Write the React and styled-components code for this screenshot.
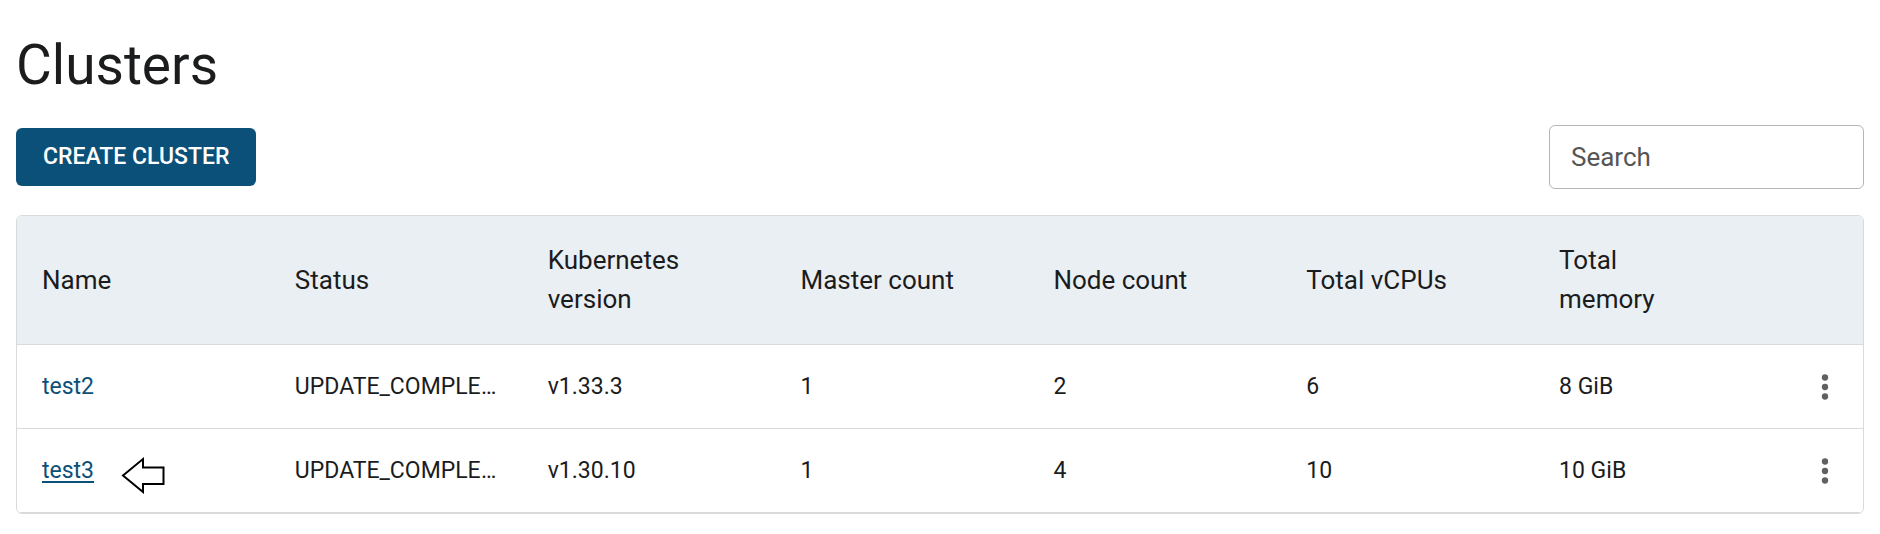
import React from "react";
import styled, { createGlobalStyle } from "styled-components";

const GlobalStyle = createGlobalStyle`
  *, *::before, *::after { box-sizing: border-box; }
  body {
    margin: 0;
    background: #ffffff;
    color: #1b1c1d;
    font-family: Roboto, "Liberation Sans", sans-serif;
  }
`;

const Page = styled.main`
  padding: 33px 16px 20px;
`;

const Title = styled.h1`
  margin: 0 0 28px;
  font-size: 55px;
  line-height: 64px;
  font-weight: 400;
`;

const Toolbar = styled.div`
  display: flex;
  align-items: center;
  justify-content: space-between;
  margin-bottom: 26px;
`;

const CreateButton = styled.button`
  height: 58px;
  padding: 0 27px;
  border: 0;
  border-radius: 6px;
  background: #0b5078;
  color: #ffffff;
  font: 500 23px/38px Roboto, "Liberation Sans", sans-serif;
  text-transform: uppercase;
  cursor: pointer;
`;

const SearchInput = styled.input`
  width: 315px;
  height: 64px;
  padding: 0 21px;
  border: 1px solid #b5b5b5;
  border-radius: 6px;
  background: #ffffff;
  color: inherit;
  font: 400 26px/38px Roboto, "Liberation Sans", sans-serif;

  &::placeholder {
    color: #555555;
    opacity: 1;
  }
`;

const TableCard = styled.div`
  overflow: hidden;
  border: 1px solid #d8dadb;
  border-radius: 6px;
`;

const Table = styled.table`
  width: 100%;
  table-layout: fixed;
  border-collapse: separate;
  border-spacing: 0;
`;

const HeadCell = styled.th`
  width: ${({ $narrow }) => ($narrow ? "76px" : "auto")};
  height: 129px;
  padding: ${({ $narrow }) => ($narrow ? "0" : "0 72px 0 25px")};
  border-bottom: 1px solid #d8dadb;
  background: #eaeff3;
  font-size: 26px;
  line-height: 39px;
  font-weight: 400;
  text-align: left;
  vertical-align: middle;
`;

const Cell = styled.td`
  height: 84px;
  padding: ${({ $action }) => ($action ? "0" : "0 25px")};
  border-bottom: 1px solid #d8dadb;
  overflow: hidden;
  font-size: 23px;
  line-height: 32px;
  text-align: ${({ $action }) => ($action ? "center" : "left")};
  text-overflow: ellipsis;
  white-space: nowrap;
  vertical-align: middle;
`;

const NameGroup = styled.div`
  display: flex;
  align-items: center;
  gap: 27px;
`;

const ClusterLink = styled.a`
  color: #0b5078;
  text-decoration: ${({ $underlined }) => ($underlined ? "underline" : "none")};
  text-decoration-thickness: 2px;
  text-underline-offset: 3px;
`;

const MenuButton = styled.button`
  display: inline-flex;
  padding: 4px;
  border: 0;
  background: transparent;
  color: #616161;
  vertical-align: middle;
  cursor: pointer;
`;

const columns = [
  "Name",
  "Status",
  "Kubernetes version",
  "Master count",
  "Node count",
  "Total vCPUs",
  "Total memory",
];

const clusters = [
  { name: "test2", status: "UPDATE_COMPLETE", values: ["v1.33.3", "1", "2", "6", "8 GiB"] },
  { name: "test3", status: "UPDATE_COMPLETE", values: ["v1.30.10", "1", "4", "10", "10 GiB"], pointed: true },
];

function PointerArrow() {
  return (
    <svg width="44" height="46" viewBox="0 0 44 46" fill="#ffffff" stroke="#000000" strokeWidth="2" aria-hidden="true">
      <path d="M2 27.5 L22 11 V19.5 H42.5 V36 H22 V44 Z" />
    </svg>
  );
}

function MoreIcon() {
  return (
    <svg width="38" height="38" viewBox="0 0 24 24" fill="currentColor" aria-hidden="true">
      <circle cx="12" cy="6" r="2" />
      <circle cx="12" cy="12" r="2" />
      <circle cx="12" cy="18" r="2" />
    </svg>
  );
}

export default function App() {
  return (
    <>
      <GlobalStyle />
      <Page>
        <Title>Clusters</Title>
        <Toolbar>
          <CreateButton type="button">Create cluster</CreateButton>
          <SearchInput type="text" placeholder="Search" aria-label="Search" />
        </Toolbar>
        <TableCard>
          <Table>
            <thead>
              <tr>
                {columns.map((label) => (
                  <HeadCell key={label} scope="col">{label}</HeadCell>
                ))}
                <HeadCell $narrow aria-label="Actions" />
              </tr>
            </thead>
            <tbody>
              {clusters.map(({ name, status, values, pointed }) => (
                <tr key={name}>
                  <Cell>
                    <NameGroup>
                      <ClusterLink href={`#${name}`} $underlined={pointed}>{name}</ClusterLink>
                      {pointed && <PointerArrow />}
                    </NameGroup>
                  </Cell>
                  <Cell>{status}</Cell>
                  {values.map((value, i) => (
                    <Cell key={columns[i + 2]}>{value}</Cell>
                  ))}
                  <Cell $action>
                    <MenuButton type="button" aria-label={`Actions for ${name}`}>
                      <MoreIcon />
                    </MenuButton>
                  </Cell>
                </tr>
              ))}
            </tbody>
          </Table>
        </TableCard>
      </Page>
    </>
  );
}
